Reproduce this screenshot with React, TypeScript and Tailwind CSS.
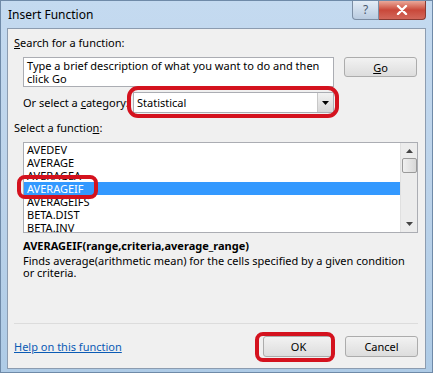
import React from "react";

const items = ["AVEDEV", "AVERAGE", "AVERAGEA", "AVERAGEIF", "AVERAGEIFS", "BETA.DIST", "BETA.INV"];

const Btn: React.FC<{ children: React.ReactNode; className?: string }> = ({ children, className }) => (
  <button
    className={`shrink-0 rounded-[3px] border border-[#acacac] bg-gradient-to-b from-[#f2f2f2] to-[#dddddd] text-[11px] text-black ${className ?? ""}`}
  >
    {children}
  </button>
);

// red marker drawn on top of the screenshot
const Mark: React.FC<{ className: string }> = ({ className }) => (
  <div className={`absolute border-[4px] border-[#d4121e] pointer-events-none ${className}`} />
);

export default function App() {
  return (
    <div
      className="relative w-[433px] h-[373px] flex flex-col border border-[#6f8aa8] bg-gradient-to-b from-[#c4daf0] via-[#bcd3ea] to-[#aecbe6] text-black"
      style={{ fontFamily: "'Noto Sans', 'Open Sans', sans-serif" }}
    >
      {/* title bar */}
      <div className="h-[27px] flex items-start shrink-0">
        <span className="pl-[7px] pt-[5px] text-[12px]">Insert Function</span>
        <div className="ml-auto mr-[6px] flex">
          <div className="w-[27px] h-[19px] rounded-bl-[4px] border border-[#7c8ea4] border-t-0 bg-gradient-to-b from-[#e3ecf6] to-[#b9cbe0] flex items-center justify-center text-[12px] text-[#4a5a70]">
            ?
          </div>
          <div className="w-[47px] h-[19px] rounded-br-[4px] border border-[#8a3a32] border-t-0 border-l-0 bg-gradient-to-b from-[#e9a89a] via-[#c9483a] to-[#d2675a] flex items-center justify-center">
            <svg width="12" height="10" viewBox="0 0 12 10">
              <path d="M2 1 L10 9 M10 1 L2 9" stroke="#fff" strokeWidth="2.4" strokeLinecap="round" />
            </svg>
          </div>
        </div>
      </div>

      {/* client area */}
      <div className="mx-[6px] mb-[3px] flex-1 border border-[#8c9cb0] bg-[#f0f0f0] flex flex-col pl-[6px] pr-[7px] text-[11px] leading-[15px]">
        <div className="mt-[6px] h-[15px]">
          <span className="underline">S</span>earch for a function:
        </div>
        <div className="mt-[7px] flex items-start gap-[10px] pl-[9px]">
          <div className="w-[311px] h-[30px] border border-[#abadb3] bg-white px-[3px] pt-[1px] leading-[13px]">
            Type a brief description of what you want to do and then click Go
          </div>
          <Btn className="w-[73px] h-[20px]">
            <span className="underline">G</span>o
          </Btn>
        </div>
        <div className="mt-[5px] h-[21px] flex items-center pl-[9px]">
          <span className="whitespace-nowrap">
            Or select a <span className="underline">c</span>ategory:
          </span>
          <div className="ml-auto mr-[84px] w-[201px] h-[21px] border border-[#abadb3] bg-white flex items-center">
            <span className="pl-[3px] flex-1">Statistical</span>
            <div className="w-[16px] h-[19px] border-l border-[#c8c8c8] bg-gradient-to-b from-[#f2f2f2] to-[#d6d6d6] flex items-center justify-center">
              <svg width="7" height="4" viewBox="0 0 7 4">
                <path d="M0 0 H7 L3.5 4 Z" fill="#000" />
              </svg>
            </div>
          </div>
        </div>
        <div className="mt-[7px] h-[15px]">
          Select a functio<span className="underline">n</span>:
        </div>
        <div className="mt-[7px] ml-[9px] w-[395px] h-[91px] border border-[#abadb3] bg-white flex">
          <div className="flex-1">
            {items.map((it) => (
              <div
                key={it}
                className={`h-[13px] leading-[13px] pl-[3px] ${it === "AVERAGEIF" ? "bg-[#3399ff] text-white" : ""}`}
              >
                {it}
              </div>
            ))}
          </div>
          <div className="w-[17px] bg-[#ececec] border-l border-[#e0e0e0] flex flex-col items-center">
            <svg className="mt-[6px]" width="7" height="4" viewBox="0 0 7 4">
              <path d="M3.5 0 L7 4 H0 Z" fill="#444" />
            </svg>
            <div className="mt-[5px] w-[15px] h-[15px] rounded-[2px] border border-[#9a9a9a] bg-gradient-to-r from-[#f0f0f0] to-[#d8d8d8]" />
            <svg className="mt-auto mb-[6px]" width="7" height="4" viewBox="0 0 7 4">
              <path d="M0 0 H7 L3.5 4 Z" fill="#444" />
            </svg>
          </div>
        </div>
        <div className="mt-[5px] h-[15px] pl-[9px] font-bold">AVERAGEIF(range,criteria,average_range)</div>
        <div className="mt-[2px] pl-[9px] leading-[12px]">
          Finds average(arithmetic mean) for the cells specified by a given condition or criteria.
        </div>
        <div className="mt-auto border-t border-[#dcdcdc]" />
        <div className="mt-[12px] mb-[11px] h-[21px] flex items-center">
          <span className="underline text-[#0b5bb5]">Help on this function</span>
          <Btn className="ml-auto mr-[11px] w-[71px] h-[21px]">OK</Btn>
          <Btn className="w-[73px] h-[21px]">Cancel</Btn>
        </div>
      </div>

      <Mark className="left-[126px] top-[85px] w-[212px] h-[32px] rounded-[11px]" />
      <Mark className="left-[16px] top-[174px] w-[81px] h-[24px] rounded-[8px]" />
      <Mark className="left-[254px] top-[331px] w-[80px] h-[30px] rounded-[8px]" />
    </div>
  );
}
